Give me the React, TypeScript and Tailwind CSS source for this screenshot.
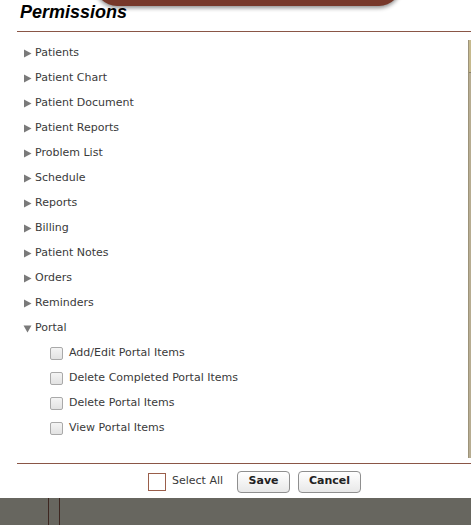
import { useState } from 'react'

const groups = [
  'Patients',
  'Patient Chart',
  'Patient Document',
  'Patient Reports',
  'Problem List',
  'Schedule',
  'Reports',
  'Billing',
  'Patient Notes',
  'Orders',
  'Reminders',
]

const portalItems = ['Add/Edit Portal Items', 'Delete Completed Portal Items', 'Delete Portal Items', 'View Portal Items']

function Arrow({ open }: { open?: boolean }) {
  return (
    <svg width="9" height="9" viewBox="0 0 9 9" className="shrink-0">
      {open ? <path d="M0.5 1.5 L8.5 1.5 L4.5 8.5 Z" fill="#7a7a7a" /> : <path d="M1 0.5 L8.5 4.5 L1 8.5 Z" fill="#7a7a7a" />}
    </svg>
  )
}

export default function App() {
  const [checked, setChecked] = useState<Record<string, boolean>>({})

  return (
    <div className="relative w-[471px] h-[525px] bg-white overflow-hidden" style={{ fontFamily: '"DejaVu Sans", Verdana, sans-serif' }}>
      {/* header tab */}
      <div className="absolute left-[95px] top-[-20px] w-[306px] h-[26px] rounded-b-[22px] bg-[#77382a] shadow-[0_2px_4px_rgba(0,0,0,0.45)]" />

      <div className="relative flex flex-col h-[498px]">
        <h1
          className="pl-[20px] pt-[1px] h-[31px] text-[18px] font-bold italic text-black leading-[22px]"
          style={{ fontFamily: '"Liberation Sans", Arial, sans-serif' }}
        >
          Permissions
        </h1>
        <div className="ml-[17px] border-b border-[#8a5646]" />

        <div className="relative flex-1 ml-[17px]">
          <div className="pt-[9px] pl-[6px] flex flex-col">
            {groups.map(g => (
              <div key={g} className="h-[25px] flex items-center gap-[3px] text-[11px] text-[#3a3a3a]">
                <Arrow />
                <span>{g}</span>
              </div>
            ))}
            <div className="h-[25px] flex items-center gap-[3px] text-[11px] text-[#3a3a3a]">
              <Arrow open />
              <span>Portal</span>
            </div>
            {portalItems.map(p => (
              <label key={p} className="h-[25px] flex items-center gap-[6px] pl-[27px] text-[11px] text-[#3a3a3a]">
                <span
                  onClick={() => setChecked(c => ({ ...c, [p]: !c[p] }))}
                  className={`w-[13px] h-[13px] border border-[#a9a9a9] rounded-[2px] ${checked[p] ? 'bg-[#cfcfcf]' : 'bg-gradient-to-b from-[#f4f4f4] to-[#e2e2e2]'}`}
                />
                <span>{p}</span>
              </label>
            ))}
          </div>
          {/* scrollbar */}
          <div className="absolute right-0 top-[8px] h-[418px] w-[3px] bg-[#b7ad92] border-l border-[#9d937a]">
            <div className="h-[33px] bg-[#c6ba8e] border-b border-[#8a816b]" />
          </div>
        </div>

        <div className="ml-[17px] border-t border-[#8a5646] h-[35px] flex items-center justify-center gap-[8px] pl-[21px] pt-[1px]">
          <div className="flex items-center gap-[6px]">
            <span className="w-[18px] h-[18px] border border-[#9a5e4a] bg-white" />
            <span className="text-[11px] text-[#3a3a3a]">Select All</span>
          </div>
          <button className="ml-[6px] w-[53px] h-[22px] rounded-[4px] border border-[#8f8f8f] bg-gradient-to-b from-white to-[#e8e8e8] text-[11px] font-bold text-[#222]">
            Save
          </button>
          <button className="w-[63px] h-[22px] rounded-[4px] border border-[#8f8f8f] bg-gradient-to-b from-white to-[#e8e8e8] text-[11px] font-bold text-[#222]">
            Cancel
          </button>
        </div>
      </div>

      {/* bottom bar */}
      <div className="relative h-[27px] bg-[#67665f]">
        <div className="absolute left-[48px] top-0 h-full w-[1px] bg-[#3d2620]" />
        <div className="absolute left-[59px] top-0 h-full w-[1px] bg-[#3d2620]" />
      </div>
    </div>
  )
}
